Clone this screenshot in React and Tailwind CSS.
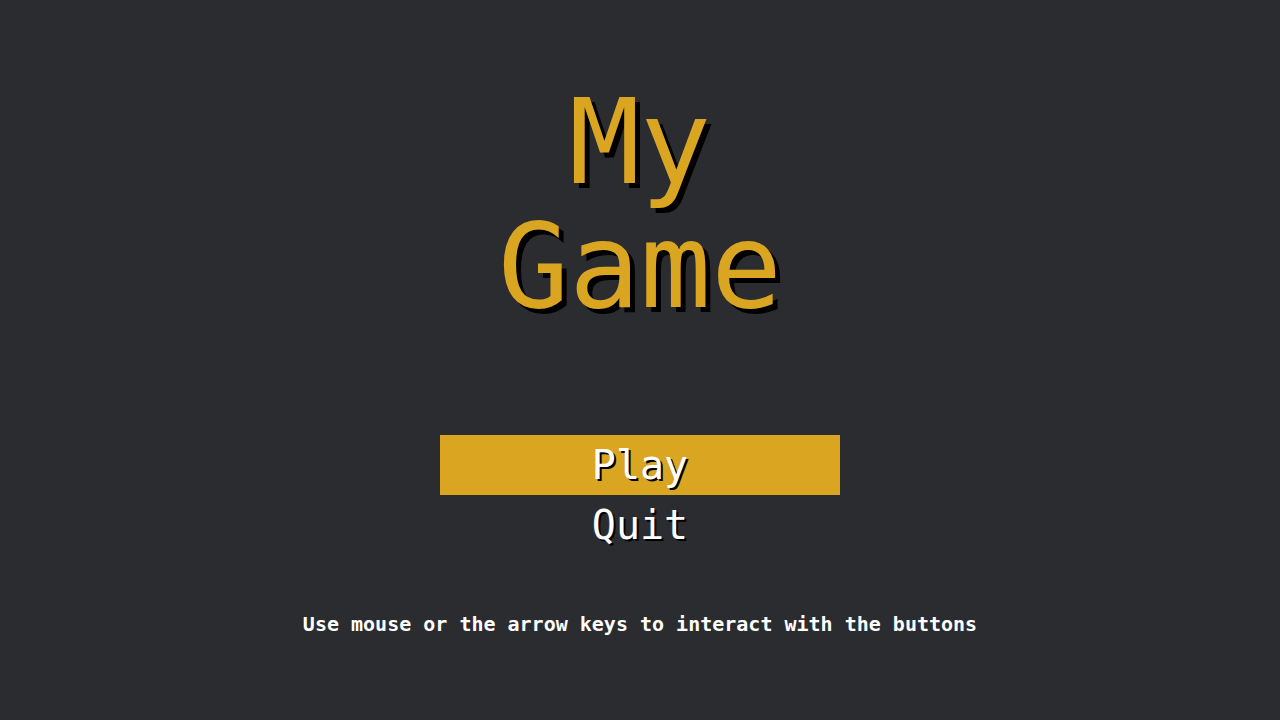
export default function App() {
  const mono = { fontFamily: '"DejaVu Sans Mono", "Liberation Mono", monospace' };
  return (
    <div className="w-[1280px] h-[720px] bg-[#2b2c30] flex flex-col items-center" style={mono}>
      <h1 className="mt-[80px] w-[420px] text-center text-[118px] leading-[124px] text-[#daa520] [text-shadow:5px_5px_0_#000]">
        My Game
      </h1>
      <div className="mt-[107px] w-[400px] flex flex-col">
        <button className="h-[60px] bg-[#daa520] text-white text-[40px] leading-[60px] [text-shadow:2px_2px_0_#000]">
          Play
        </button>
        <button className="h-[60px] text-white text-[40px] leading-[60px] [text-shadow:2px_2px_0_#000]">
          Quit
        </button>
      </div>
      <p className="mt-[57px] text-white text-[20px] leading-[24px] font-bold">
        Use mouse or the arrow keys to interact with the buttons
      </p>
    </div>
  );
}
